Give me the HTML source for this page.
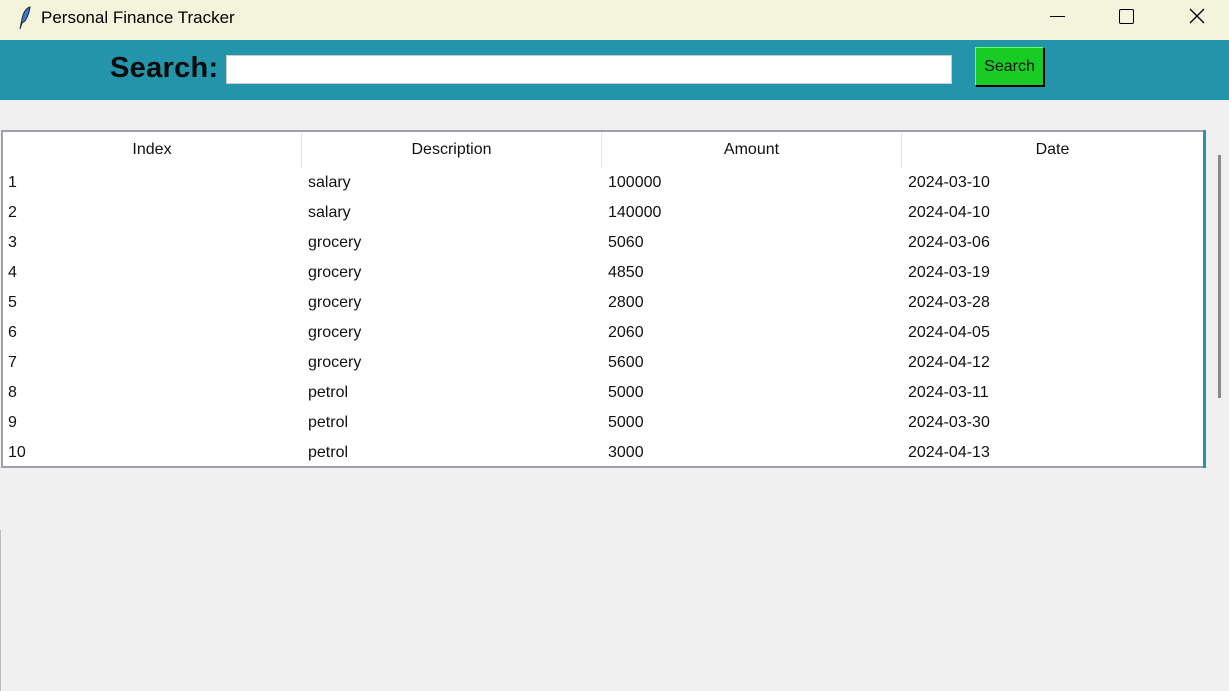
<!DOCTYPE html>
<html><head><style>
body{margin:0;width:1229px;height:691px;background:#f0f0f0;position:relative;overflow:hidden;font-family:"Liberation Sans",sans-serif}
.title{position:absolute;left:0;top:0;width:1229px;height:40px;background:#f4f4dc}
.title span{position:absolute;left:41px;top:8px;font-size:17px;color:#000}
.band{position:absolute;left:0;top:40px;width:1229px;height:60px;background:#2494ab}
.lbl{position:absolute;left:110px;top:52px;font-size:29px;font-weight:bold;color:#0a0a0a;letter-spacing:0.3px}
.inp{position:absolute;left:226px;top:55px;width:726px;height:29px;background:#fff;border:1px solid #ccc;box-sizing:border-box}
.btn{position:absolute;left:975px;top:47px;width:69px;height:39px;background:#18cc24;border:1px solid #000;border-top-color:#6f6;border-left-color:#6f6;box-shadow:1px 1px 0 #000;box-sizing:border-box;font-size:16px;text-align:center;line-height:37px;color:#111}
.tbl{position:absolute;left:1px;top:130px;width:1202px;height:338px;background:#fff;border:2px solid #a0a0a8;border-right:none;box-sizing:border-box}
.tb{position:absolute;left:1203px;top:130px;width:3px;height:338px;background:#2494ab}
.hd{position:absolute;top:0;height:36px;line-height:36px;text-align:center;font-size:16px;color:#111;border-right:1px solid #e5e5e5;box-sizing:border-box}
.c{position:absolute;font-size:16px;color:#111;height:30px;line-height:32px}
.sb{position:absolute;left:1218px;top:155px;width:3px;height:243px;background:#8a8a8a}
</style></head><body>
<div class="title">
<svg style="position:absolute;left:16px;top:5px" width="16" height="26" viewBox="0 0 16 26"><path d="M4 24 L6 14 Q8 4 14 2 Q13 10 9 16 L6 18 Z" fill="#3a78c8" stroke="#223" stroke-width="1"/></svg>
<span>Personal Finance Tracker</span>
<div style="position:absolute;left:1050px;top:16px;width:15px;height:1px;background:#000"></div>
<div style="position:absolute;left:1119px;top:9px;width:13px;height:13px;border:1.5px solid #000;border-radius:2px"></div>
<svg style="position:absolute;left:1189px;top:8px" width="16" height="16"><path d="M1 1L15 15M15 1L1 15" stroke="#000" stroke-width="1.3"/></svg>
</div>
<div class="band"></div>
<div class="lbl">Search:</div>
<div class="inp"></div>
<div class="btn">Search</div>
<div class="tbl">
<div class="hd" style="left:0;width:299px">Index</div>
<div class="hd" style="left:299px;width:300px">Description</div>
<div class="hd" style="left:599px;width:300px">Amount</div>
<div class="hd" style="left:899px;width:301px;border:none">Date</div>
</div>
<div class="tb"></div>
<div class="sb"></div>
<div style="position:absolute;left:0;top:530px;width:1px;height:161px;background:#bbb"></div>
<div class="c" style="left:8px;top:167px">1</div><div class="c" style="left:308px;top:167px">salary</div><div class="c" style="left:608px;top:167px">100000</div><div class="c" style="left:908px;top:167px">2024-03-10</div>
<div class="c" style="left:8px;top:197px">2</div><div class="c" style="left:308px;top:197px">salary</div><div class="c" style="left:608px;top:197px">140000</div><div class="c" style="left:908px;top:197px">2024-04-10</div>
<div class="c" style="left:8px;top:227px">3</div><div class="c" style="left:308px;top:227px">grocery</div><div class="c" style="left:608px;top:227px">5060</div><div class="c" style="left:908px;top:227px">2024-03-06</div>
<div class="c" style="left:8px;top:257px">4</div><div class="c" style="left:308px;top:257px">grocery</div><div class="c" style="left:608px;top:257px">4850</div><div class="c" style="left:908px;top:257px">2024-03-19</div>
<div class="c" style="left:8px;top:287px">5</div><div class="c" style="left:308px;top:287px">grocery</div><div class="c" style="left:608px;top:287px">2800</div><div class="c" style="left:908px;top:287px">2024-03-28</div>
<div class="c" style="left:8px;top:317px">6</div><div class="c" style="left:308px;top:317px">grocery</div><div class="c" style="left:608px;top:317px">2060</div><div class="c" style="left:908px;top:317px">2024-04-05</div>
<div class="c" style="left:8px;top:347px">7</div><div class="c" style="left:308px;top:347px">grocery</div><div class="c" style="left:608px;top:347px">5600</div><div class="c" style="left:908px;top:347px">2024-04-12</div>
<div class="c" style="left:8px;top:377px">8</div><div class="c" style="left:308px;top:377px">petrol</div><div class="c" style="left:608px;top:377px">5000</div><div class="c" style="left:908px;top:377px">2024-03-11</div>
<div class="c" style="left:8px;top:407px">9</div><div class="c" style="left:308px;top:407px">petrol</div><div class="c" style="left:608px;top:407px">5000</div><div class="c" style="left:908px;top:407px">2024-03-30</div>
<div class="c" style="left:8px;top:437px">10</div><div class="c" style="left:308px;top:437px">petrol</div><div class="c" style="left:608px;top:437px">3000</div><div class="c" style="left:908px;top:437px">2024-04-13</div>
</body></html>
